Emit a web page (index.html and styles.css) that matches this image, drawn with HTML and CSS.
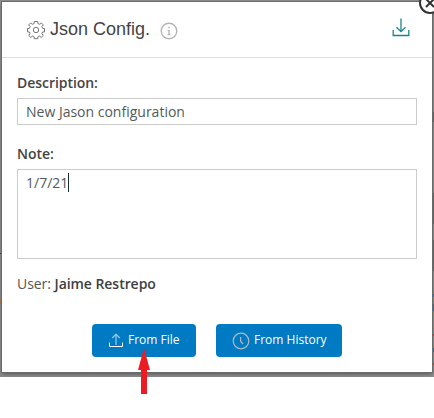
FILE: index.html
```html
<!DOCTYPE html>
<html lang="en">
<head>
<meta charset="utf-8">
<title>Json Config.</title>
<link rel="stylesheet" href="styles.css">
</head>
<body>
<div class="backdrop">
  <section class="modal">
    <header class="header">
      <svg class="gear" width="20" height="20" viewBox="0 0 20 20" fill="none" stroke="#777"><path d="M8.2 1.5h3.6v2l2 .8 1.5-1.4 2 2-1.4 1.7.8 1.8h1.8v3.5h-1.8l-.8 1.9 1.4 1.6-2.1 2-1.6-1.3-1.8.8v1.8H8.2v-1.8l-1.8-.8-1.6 1.3-2.1-2 1.4-1.6-.8-1.9H1.5V8.4h1.8l.8-1.8-1.4-1.7 2-2 1.5 1.4 2-.8z"/><circle cx="10" cy="10" r="2.7"/></svg>
      <h1 class="title">Json Config.</h1>
      <svg class="info" width="18" height="18" viewBox="0 0 18 18" fill="none" stroke="#b5b5b5"><circle cx="9" cy="9" r="7.8" stroke-width="1.4"/><path d="M9 8v5M9 4.7v1.6" stroke-width="1.4"/><path d="M7.5 8.3H9M7.3 12.7h3.4"/></svg>
      <svg class="download" width="18" height="19" viewBox="0 0 18 19" fill="none" stroke="#16848c" stroke-width="1.3"><path d="M9 .5v13M4.5 9.2 9 13.7l4.5-4.5M1.2 12v5.5h15.6V12"/></svg>
    </header>
    <div class="body">
      <div class="label">Description:</div>
      <div class="input"><span class="value">New Jason configuration</span></div>
      <div class="label note">Note:</div>
      <div class="input area"><span class="value">1/7/21</span><i class="caret"></i></div>
      <p class="user"><span>User:</span> <b>Jaime Restrepo</b></p>
      <div class="actions">
        <div class="button file">
          <svg width="14" height="15" viewBox="0 0 14 15" fill="none" stroke="#fff"><path d="M7 12V1.5M3.2 5 7 1.2 10.8 5" stroke="#8dc5ed" stroke-width="1.3"/><path d="M.5 9.5v4h13v-4"/></svg>
          <span>From File</span>
        </div>
        <div class="button history">
          <svg width="18" height="18" viewBox="0 0 18 18" fill="none" stroke="#b2bac0" stroke-width="1.2"><circle cx="9" cy="9" r="7.8"/><path d="M8.6 5v4.5l2.5 2.5"/></svg>
          <span>From History</span>
        </div>
      </div>
    </div>
  </section>
  <span class="close"><svg width="22" height="22" viewBox="0 0 22 22" fill="none"><circle cx="11" cy="11" r="10" fill="#fff" stroke="#333" stroke-width="2"/><path d="m7 7 8 8m0-8-8 8" stroke="#333" stroke-width="2"/></svg></span>
  <svg class="pointer" width="12" height="46" viewBox="0 0 12 46"><path d="M6 0 12 22H9v24H3V22H0z" fill="#ed1c24"/></svg>
</div>
</body>
</html>
```
FILE: styles.css
```css
* { box-sizing: border-box; }
body { margin: 0; height: 418px; overflow: hidden; background: #fff; font-family: "Open Sans", sans-serif; }
.backdrop {
  position: relative; height: 377px; padding: 2px;
  background:
    linear-gradient(#d33740, #d33740) 432px 334px / 2px 2px no-repeat,
    linear-gradient(#d33740, #d33740) 432px 363px / 2px 2px no-repeat,
    linear-gradient(#3e68a4, #3e68a4) 433px 294px / 1px 3px no-repeat,
    linear-gradient(#3e68a4, #3e68a4) 433px 304px / 1px 7px no-repeat,
    linear-gradient(#3e68a4, #3e68a4) 433px 348px / 1px 4px no-repeat,
    linear-gradient(#666, #666) 433px 193px / 1px 31px no-repeat,
    linear-gradient(#666, #666) 433px 240px / 1px 31px no-repeat,
    linear-gradient(#666, #666) 433px 112px / 1px 10px no-repeat,
    linear-gradient(#b47a47, #b47a47) 0 300px / 1px 4px no-repeat,
    linear-gradient(#403030, #403030) 0 253px / 2px 1px no-repeat,
    #8e8e8e;
}
.modal { height: 370px; background: #fff; box-shadow: 0 0 0 1px #6b6b6b, 0 2px 4px #555; clip-path: inset(-2px -2px -5px); }
.header { display: flex; align-items: center; height: 56px; border-bottom: 1px solid #ddd; padding: 0 22px 0 24px; }
.title { margin: -2px 0 0 4px; width: 100px; font: 18px/24px "Liberation Sans", sans-serif; color: #444; white-space: nowrap; }
.info { margin: 2px 0 0 10px; }
.download { margin: -5px 0 0 auto; }
.body { padding: 15px 15px 0; }
.label { height: 20px; font-size: 14px; line-height: 20px; font-weight: 600; letter-spacing: -.05px; color: #444; }
.input { display: flex; height: 27px; margin-top: 5px; padding: 0 8px; border: 1px solid #ccc; font-size: 14px; line-height: 25px; color: #525b59; }
.note { margin-top: 19px; }
.area { height: 90px; }
.caret { width: 1px; height: 19px; margin-top: 3px; background: #17302b; }
.user { margin: 15px 0 0; font-size: 14px; line-height: 20px; letter-spacing: -.05px; color: #555; }
.user b { font-weight: 600; color: #404040; }
.actions { display: flex; gap: 20px; margin: 30px 0 0 75px; }
.button { display: flex; align-items: center; height: 33px; border-radius: 4px; background: #007ac3; color: #fff; font-size: 12px; font-weight: 500; white-space: nowrap; }
.button span { margin-top: -2px; }
.file { width: 104px; padding-left: 17px; gap: 5px; }
.history { width: 126px; padding-left: 16px; gap: 4px; }
.close { position: absolute; left: 419px; top: -8px; width: 22px; height: 22px; }
.close svg, .pointer { display: block; }
.pointer { position: absolute; left: 138px; top: 348px; }
```
